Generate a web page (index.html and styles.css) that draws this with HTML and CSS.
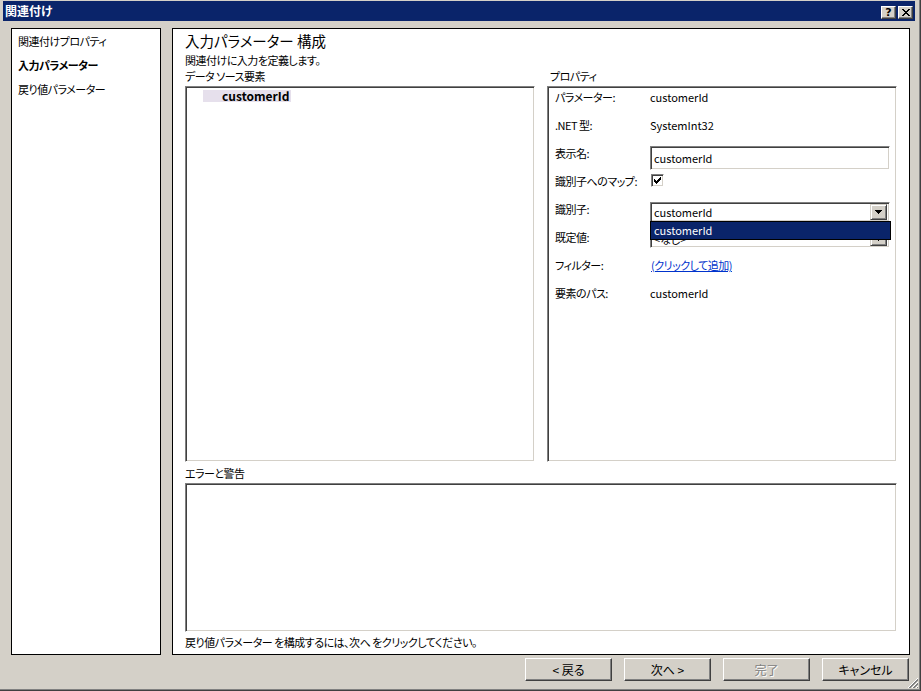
FILE: index.html
```html
<!DOCTYPE html>
<html lang="ja">
<head>
<meta charset="utf-8">
<title>関連付け</title>
<link rel="stylesheet" href="styles.css">
</head>
<body>
<div class="window">
  <div class="titlebar">
    <span class="title">関連付け</span>
    <div class="caption-buttons">
      <span class="cap-btn help">?</span>
      <span class="cap-btn close">
        <svg width="8" height="7" viewBox="0 0 8 7"><path d="M0 0h2v1h-2zM6 0h2v1h-2zM1 1h2v1h-2zM5 1h2v1h-2zM2 2h4v1h-4zM3 3h2v1h-2zM2 4h4v1h-4zM1 5h2v1h-2zM5 5h2v1h-2zM0 6h2v1h-2zM6 6h2v1h-2z" fill="#000"/></svg>
      </span>
    </div>
  </div>
  <div class="main">
    <nav class="nav">
      <div class="nav-item">関連付けプロパティ</div>
      <div class="nav-item active">入力パラメーター</div>
      <div class="nav-item">戻り値パラメーター</div>
    </nav>
    <section class="content">
      <h1 class="heading">入力パラメーター 構成</h1>
      <p class="subtitle">関連付けに入力を定義します。</p>
      <div class="columns">
        <div class="column">
          <div class="group-label">データ ソース要素</div>
          <div class="sunken tree">
            <div class="tree-item"><span class="tree-sel">customerId</span></div>
          </div>
        </div>
        <div class="column">
          <div class="group-label props-label">プロパティ</div>
          <div class="sunken props">
            <div class="prop-row">
              <div class="prop-label">パラメーター:</div>
              <div class="prop-value">customerId</div>
            </div>
            <div class="prop-row">
              <div class="prop-label">.NET 型:</div>
              <div class="prop-value">SystemInt32</div>
            </div>
            <div class="prop-row">
              <div class="prop-label">表示名:</div>
              <div class="prop-value"><div class="sunken field">customerId</div></div>
            </div>
            <div class="prop-row">
              <div class="prop-label">識別子へのマップ:</div>
              <div class="prop-value">
                <span class="sunken checkbox">
                  <svg width="7" height="7" viewBox="0 0 7 7"><path d="M6 0v1h-1v1h-1v1h-1v1h-1v-1h-1v-1h-1v3h1v1h1v1h1v-1h1v-1h1v-1h1v-1h1v-3z" fill="#000"/></svg>
                </span>
              </div>
            </div>
            <div class="prop-row">
              <div class="prop-label">識別子:</div>
              <div class="prop-value">
                <div class="sunken combo">
                  <span class="combo-text">customerId</span>
                  <span class="combo-btn"><svg width="7" height="4" viewBox="0 0 7 4"><path d="M0 0h7v1h-1v1h-1v1h-1v1h-1v-1h-1v-1h-1v-1h-1z" fill="#000"/></svg></span>
                </div>
                <div class="dropdown">customerId</div>
              </div>
            </div>
            <div class="prop-row">
              <div class="prop-label">既定値:</div>
              <div class="prop-value">
                <div class="sunken combo combo-low">
                  <span class="combo-text">&lt;なし&gt;</span>
                  <span class="combo-btn"><svg width="7" height="4" viewBox="0 0 7 4"><path d="M0 0h7v1h-1v1h-1v1h-1v1h-1v-1h-1v-1h-1v-1h-1z" fill="#000"/></svg></span>
                </div>
              </div>
            </div>
            <div class="prop-row">
              <div class="prop-label">フィルター:</div>
              <div class="prop-value"><a class="link" href="#">(クリックして追加)</a></div>
            </div>
            <div class="prop-row">
              <div class="prop-label">要素のパス:</div>
              <div class="prop-value">customerId</div>
            </div>
          </div>
        </div>
      </div>
      <div class="group-label error-label">エラーと警告</div>
      <div class="sunken errors"></div>
      <p class="hint">戻り値パラメーター を構成するには、次へ をクリックしてください。</p>
    </section>
  </div>
  <div class="footer">
    <button class="btn">&lt; 戻る</button>
    <button class="btn">次へ &gt;</button>
    <button class="btn disabled">完了</button>
    <button class="btn">キャンセル</button>
  </div>
  <svg class="grip" width="12" height="12" viewBox="0 0 12 12">
    <path d="M11 1L1 11M11 5L5 11M11 9L9 11" stroke="#fff" stroke-width="1"/>
    <path d="M11 2L2 11M11 3L3 11M11 6L6 11M11 7L7 11M11 10L10 11" stroke="#808080" stroke-width="1"/>
  </svg>
</div>
</body>
</html>
```

FILE: styles.css
```css
* {
  box-sizing: border-box;
}

html,
body {
  margin: 0;
  padding: 0;
}

body {
  width: 921px;
  height: 691px;
  overflow: hidden;
  background: #d4d0c8;
  color: #000;
  font-family: "Noto Sans CJK JP", "Noto Sans", sans-serif;
  font-size: 11px;
  line-height: 14px;
  font-feature-settings: "palt" 1;
}

.window {
  position: relative;
  width: 921px;
  height: 691px;
  padding-top: 1px;
  border-right: 1px solid #404040;
  border-bottom: 1px solid #404040;
  box-shadow: inset -1px -1px #808080;
  display: flex;
  flex-direction: column;
}

/* title bar */
.titlebar {
  height: 20px;
  margin: 0 5px 0 3px;
  padding: 0 2px;
  background: #0a246a;
  display: flex;
  align-items: center;
  justify-content: space-between;
}

.title {
  color: #fff;
  font-weight: bold;
  font-size: 12px;
  line-height: 14px;
  font-feature-settings: normal;
}

.caption-buttons {
  display: flex;
  gap: 2px;
  align-self: flex-end;
  margin-bottom: 2px;
}

.cap-btn {
  width: 15px;
  height: 13px;
  background: #d4d0c8;
  border: 1px solid;
  border-color: #fff #404040 #404040 #fff;
  box-shadow: inset -1px -1px #808080;
  display: flex;
  align-items: center;
  justify-content: center;
}

.help {
  font-family: "DejaVu Sans", sans-serif;
  font-weight: bold;
  font-size: 11px;
  line-height: 11px;
}

/* main area */
.main {
  margin-top: 7px;
  height: 627px;
  padding: 0 10px 0 11px;
  display: flex;
  gap: 11px;
}

.nav {
  width: 150px;
  background: #fff;
  border: 1px solid #000;
  padding-left: 6px;
  letter-spacing: -0.5px;
}

.nav-item {
  height: 24px;
  line-height: 24px;
  white-space: nowrap;
}

.nav-item.active {
  font-weight: bold;
}

.content {
  flex: 1;
  background: #fff;
  border: 1px solid #000;
  padding: 2px 12px 0 12px;
  display: flex;
  flex-direction: column;
}

.heading {
  margin: 0;
  font-size: 14.5px;
  font-weight: normal;
  line-height: 20px;
}

.subtitle {
  margin: 1px 0 0 0;
  line-height: 16px;
  letter-spacing: -0.5px;
}

.columns {
  display: flex;
  gap: 12px;
}

.column {
  flex: 1;
  display: flex;
  flex-direction: column;
}

.group-label {
  line-height: 16px;
  margin-bottom: 2px;
  letter-spacing: -0.5px;
}

.props-label {
  padding-left: 3px;
}

.error-label {
  margin-top: 3px;
  margin-bottom: 2px;
}

.sunken {
  background: #fff;
  border: 1px solid;
  border-color: #808080 #fff #fff #808080;
  box-shadow: inset 1px 1px #404040, inset -1px -1px #d4d0c8;
}

.tree {
  height: 376px;
  padding: 2px 2px 0 17px;
}

.tree-item {
  height: 12px;
}

.tree-sel {
  display: inline-block;
  height: 12px;
  line-height: 12px;
  padding: 0 2px 0 19px;
  background: #e6e0ec;
  font-weight: bold;
  font-size: 12px;
}

.props {
  height: 376px;
  padding: 1px 6px 0 7px;
}

.prop-row {
  display: flex;
  height: 28px;
}

.prop-label {
  width: 95px;
  padding-top: 2px;
  line-height: 14px;
  white-space: nowrap;
  letter-spacing: -0.5px;
}

.prop-value {
  flex: 1;
  position: relative;
  padding-top: 2px;
  line-height: 14px;
  white-space: nowrap;
}

.field {
  height: 24px;
  padding: 3px 3px;
  line-height: 16px;
}

.checkbox {
  display: flex;
  align-items: center;
  justify-content: center;
  width: 13px;
  height: 13px;
  margin-left: 1px;
}

.combo {
  height: 20px;
  display: flex;
  align-items: center;
  padding: 2px 2px 2px 3px;
}

.combo-low {
  height: 19px;
  margin-top: -1px;
}

.combo-text {
  flex: 1;
  line-height: 14px;
}

.combo-btn {
  width: 17px;
  height: 16px;
  background: #d4d0c8;
  border: 1px solid;
  border-color: #d4d0c8 #404040 #404040 #d4d0c8;
  box-shadow: inset 1px 1px #fff, inset -1px -1px #808080;
  display: flex;
  align-items: center;
  justify-content: center;
}

.combo-low .combo-btn {
  height: 15px;
}

.dropdown {
  position: absolute;
  top: 21px;
  left: 0;
  width: 241px;
  height: 19px;
  background: #0a246a;
  border: 1px solid #000;
  color: #fff;
  padding-left: 3px;
  line-height: 16px;
  z-index: 2;
}

.link {
  color: #0033cc;
  text-decoration: underline;
  padding-left: 1px;
  letter-spacing: -0.5px;
}

.errors {
  height: 149px;
}

.hint {
  margin: 2px 0 0 0;
  line-height: 17px;
  white-space: nowrap;
  letter-spacing: -0.5px;
}

/* footer */
.footer {
  margin-top: 3px;
  padding-right: 11px;
  display: flex;
  justify-content: flex-end;
  gap: 12px;
}

.btn {
  width: 87px;
  height: 23px;
  padding: 0;
  background: #d4d0c8;
  border: 1px solid;
  border-color: #fff #404040 #404040 #fff;
  box-shadow: inset -1px -1px #808080;
  font-family: inherit;
  font-size: 12px;
  line-height: 14px;
  color: #000;
  font-feature-settings: "palt" 1;
}

.btn.disabled {
  color: #808080;
  text-shadow: 1px 1px #fff;
}

.grip {
  position: absolute;
  right: 1px;
  bottom: 1px;
}
```
